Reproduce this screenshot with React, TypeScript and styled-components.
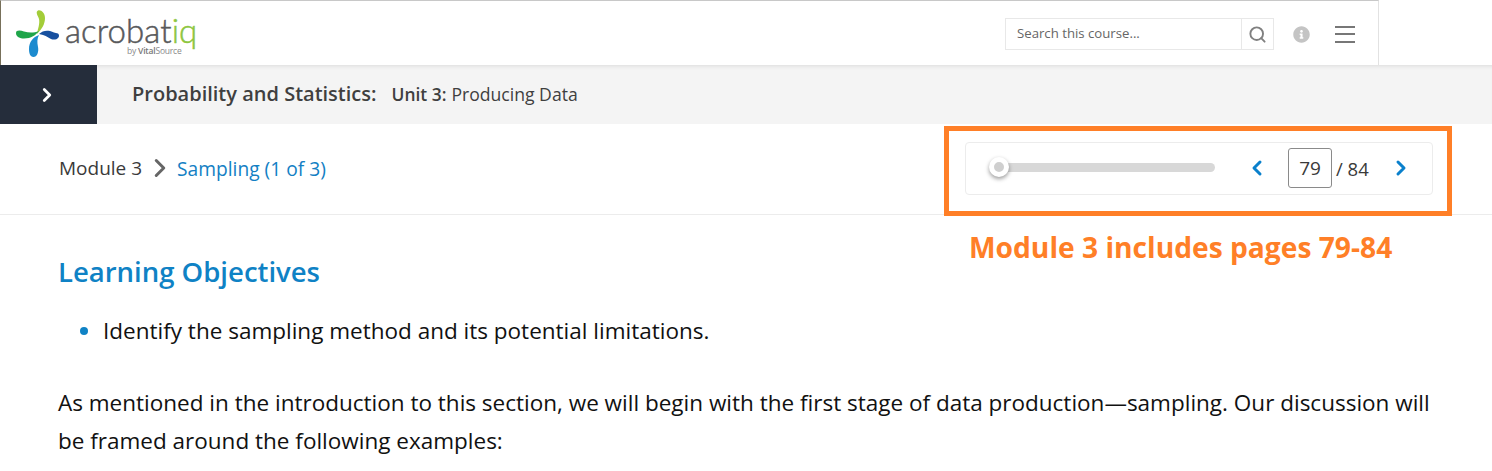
import styled, { createGlobalStyle } from 'styled-components'
import { ChevronLeft, ChevronRight, Search } from 'lucide-react'
import { FaInfoCircle } from 'react-icons/fa'

const GlobalStyle = createGlobalStyle`
  html, body {
    margin: 0;
    padding: 0;
    background: white;
    font-family: "Open Sans", "Liberation Sans", sans-serif;
    overflow: hidden;
  }
`

const Page = styled.div`
  position: relative;
  width: 1492px;
  height: 471px;
  overflow: hidden;
`

const TopHeader = styled.header`
  box-sizing: border-box;
  width: 1379px;
  height: 65px;
  display: flex;
  align-items: center;
  background: white;
  border-top: 1px solid #c8c8c8;
  border-right: 1px solid #e2e2e2;
  border-left: 1px solid #77705a;
`

const LogoWrap = styled.div`
  display: flex;
  align-items: flex-start;
  margin-left: 13px;
`

const LogoText = styled.div`
  display: flex;
  flex-direction: column;
  margin-left: 3px;
  margin-top: 6px;
`

const LogoWord = styled.div`
  font-family: "Lato", sans-serif;
  font-size: 33px;
  font-weight: 300;
  line-height: 33px;
  letter-spacing: 0.1px;
  color: #58595b;
  -webkit-text-stroke: 0.5px #58595b;
`

const LogoAccent = styled.span`
  color: #8dc63f;
  -webkit-text-stroke: 0.5px #8dc63f;
`

const LogoBy = styled.div`
  font-size: 8.5px;
  line-height: 9px;
  letter-spacing: -0.2px;
  color: #8a8a8a;
  margin-top: -1px;
  margin-left: 62px;
`

const LogoByStrong = styled.span`
  font-weight: 600;
  color: #777;
`

const HeaderTools = styled.div`
  margin-left: auto;
  display: flex;
  align-items: center;
  margin-top: 2px;
  margin-right: 23px;
`

const SearchBox = styled.div`
  box-sizing: border-box;
  width: 269px;
  height: 32px;
  display: flex;
  border: 1px solid #e8e8e8;
`

const SearchText = styled.div`
  flex: 1;
  padding-left: 11px;
  font-size: 13.2px;
  line-height: 29px;
  color: #666;
`

const SearchButton = styled.div`
  width: 31px;
  display: flex;
  align-items: center;
  justify-content: center;
  border-left: 1px solid #e8e8e8;
  color: #808080;
`

const InfoButton = styled.div`
  display: flex;
  margin-left: 19px;
  color: #c4c4c4;
`

const MenuIcon = styled.div`
  width: 20px;
  height: 17px;
  margin-left: 25px;
  display: flex;
  flex-direction: column;
  justify-content: space-between;
`

const MenuLine = styled.span`
  display: block;
  height: 2px;
  background: #777;
`

const CourseBar = styled.div`
  height: 59px;
  display: flex;
  align-items: center;
  background: #f4f4f4;
  box-shadow: inset 0 4px 4px -3px rgba(0, 0, 0, 0.1);
`

const ToggleButton = styled.div`
  width: 97px;
  height: 100%;
  display: flex;
  align-items: center;
  justify-content: center;
  padding-right: 4px;
  box-sizing: border-box;
  background: #252d3b;
  color: white;
`

const CourseTitle = styled.div`
  margin-left: 35px;
  margin-bottom: 2px;
  font-size: 20px;
  font-weight: 600;
  color: #3f3f3f;
`

const UnitLabel = styled.span`
  margin-left: 15px;
  margin-bottom: 1px;
  font-size: 17.4px;
  font-weight: 600;
  color: #3f3f3f;
`

const UnitName = styled.span`
  margin-left: 5px;
  margin-bottom: 1px;
  font-size: 17.6px;
  color: #3f3f3f;
`

const CrumbRow = styled.div`
  box-sizing: border-box;
  height: 91px;
  display: flex;
  align-items: center;
  padding: 0 59px 2px;
  border-bottom: 1px solid #ececec;
`

const Crumb = styled.span`
  font-size: 19px;
  color: #3a3a3a;
`

const CrumbLink = styled(Crumb)`
  font-size: 19.2px;
  color: #1380c4;
`

const CrumbArrow = styled.span`
  display: flex;
  margin: 0 2px 0 3px;
  color: #666;
`

const PagerPanel = styled.div`
  box-sizing: border-box;
  margin-left: auto;
  width: 468px;
  height: 53px;
  display: flex;
  align-items: center;
  padding-left: 24px;
  border: 1px solid #ececec;
  border-radius: 4px;
  color: #3a3a3a;
`

const Track = styled.div`
  position: relative;
  width: 225px;
  height: 9px;
  margin-top: -1px;
  border-radius: 5px;
  background: #d8d8d8;
`

const Thumb = styled.div`
  position: absolute;
  left: -1px;
  top: -6px;
  box-sizing: border-box;
  width: 20px;
  height: 20px;
  border-radius: 50%;
  border: 5px solid white;
  background: #cfcfcf;
  box-shadow: 0 2px 4px rgba(0, 0, 0, 0.4);
`

const PagerArrow = styled.span<{ $gap: number }>`
  display: flex;
  margin-left: ${(p) => p.$gap}px;
  color: #0a80cc;
`

const PageInput = styled.div`
  box-sizing: border-box;
  width: 44px;
  height: 40px;
  margin-left: 19px;
  border: 1px solid #8a8a8a;
  border-radius: 3px;
  text-align: center;
  font-size: 19px;
  line-height: 38px;
`

const PageTotal = styled.span`
  margin-left: 4px;
  font-size: 18.5px;
`

const Content = styled.main`
  padding: 0 59px;
`

const Heading = styled.h2`
  margin: 38px 0 0;
  margin-left: -1px;
  font-size: 27.5px;
  font-weight: 600;
  line-height: 38px;
  color: #0f82c5;
`

const List = styled.ul`
  margin: 21px 0 0;
  padding-left: 44px;
  font-size: 22.5px;
  line-height: 38px;
  color: #111;

  li::marker {
    color: #0f82c5;
  }
`

const Para = styled.p`
  margin: 34px 0 0 -1px;
  width: 1380px;
  font-size: 22.5px;
  line-height: 38px;
  color: #111;
`

const Callout = styled.div`
  position: absolute;
  left: 944px;
  top: 126px;
  box-sizing: border-box;
  width: 508px;
  height: 90px;
  border: 5px solid #ff7f27;
`

const CalloutText = styled.div`
  position: absolute;
  left: 969px;
  top: 228px;
  font-family: "Open Sans", sans-serif;
  font-size: 28.2px;
  font-weight: 700;
  line-height: 38px;
  color: #ff7f27;
`

function LogoMark() {
  return (
    <svg width="48" height="50" viewBox="14 7 48 50">
      <path d="M38 9.5C41 8.5 45 12 45 17C45 23 42 28 37 33C38 27 40 23 39 18C38 15 35 11 38 9.5Z" fill="#a3cd39" />
      <path d="M16 32C16 29 20 29 24 30.5C29 32 34 32 39 30C36 34 31 37.5 24 37.5C20 37.5 16 36 16 32Z" fill="#1fa54a" />
      <path d="M39 33C42 30 46 29 50 30C53 31 55 32 58 32.5C60 34 59 38 55 38.5C50 39 47 35 43 34C42 33.5 40 33.5 39 33Z" fill="#17509f" />
      <path d="M39 34C37 38 37 41 38 46C39 51 37 56 33.5 56C30 56 29 52 29 48C29 41 33 36 39 34Z" fill="#1c8bcf" />
    </svg>
  )
}

export default function App() {
  return (
    <Page>
      <GlobalStyle />
      <TopHeader>
        <LogoWrap>
          <LogoMark />
          <LogoText>
            <LogoWord>
              acrobat<LogoAccent>iq</LogoAccent>
            </LogoWord>
            <LogoBy>
              by <LogoByStrong>Vital</LogoByStrong>Source
            </LogoBy>
          </LogoText>
        </LogoWrap>
        <HeaderTools>
          <SearchBox>
            <SearchText>Search this course...</SearchText>
            <SearchButton>
              <Search size={19} strokeWidth={2.4} />
            </SearchButton>
          </SearchBox>
          <InfoButton>
            <FaInfoCircle size={17} />
          </InfoButton>
          <MenuIcon>
            <MenuLine />
            <MenuLine />
            <MenuLine />
          </MenuIcon>
        </HeaderTools>
      </TopHeader>
      <CourseBar>
        <ToggleButton>
          <ChevronRight size={22} strokeWidth={3} />
        </ToggleButton>
        <CourseTitle>Probability and Statistics:</CourseTitle>
        <UnitLabel>Unit 3:</UnitLabel>
        <UnitName>Producing Data</UnitName>
      </CourseBar>
      <CrumbRow>
        <Crumb>Module 3</Crumb>
        <CrumbArrow>
          <ChevronRight size={30} strokeWidth={2.4} />
        </CrumbArrow>
        <CrumbLink>Sampling (1 of 3)</CrumbLink>
        <PagerPanel>
          <Track>
            <Thumb />
          </Track>
          <PagerArrow $gap={30}>
            <ChevronLeft size={24} strokeWidth={3} />
          </PagerArrow>
          <PageInput>79</PageInput>
          <PageTotal>/ 84</PageTotal>
          <PagerArrow $gap={20}>
            <ChevronRight size={24} strokeWidth={3} />
          </PagerArrow>
        </PagerPanel>
      </CrumbRow>
      <Content>
        <Heading>Learning Objectives</Heading>
        <List>
          <li>Identify the sampling method and its potential limitations.</li>
        </List>
        <Para>
          As mentioned in the introduction to this section, we will begin with the first stage of data production—sampling. Our discussion will be framed around the following examples:
        </Para>
      </Content>
      <Callout />
      <CalloutText>Module 3 includes pages 79-84</CalloutText>
    </Page>
  )
}
